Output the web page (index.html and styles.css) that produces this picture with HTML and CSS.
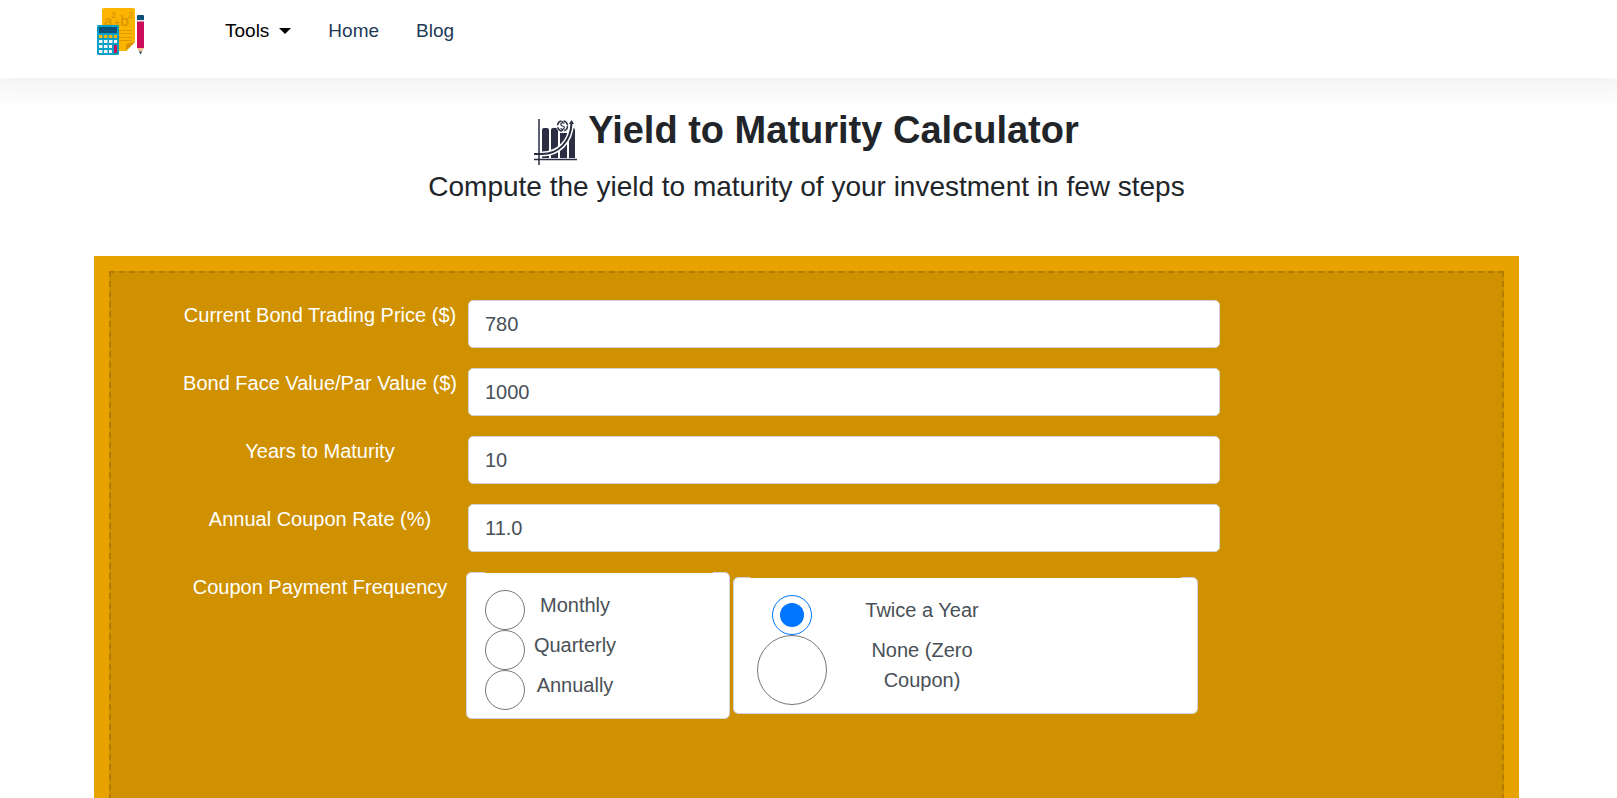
FILE: index.html
```html
<!DOCTYPE html>
<html lang="en">
<head>
    <meta charset="UTF-8">
    <meta name="viewport" content="width=device-width, initial-scale=1.0">
    <title>Yield to Maturity Calculator</title>
    <link rel="stylesheet" href="styles.css">
</head>
<body>

    <header class="site-header">
        <nav class="navbar">
            <a class="brand" href="#" aria-label="Calculators">
                <svg class="logo" viewBox="0 0 48 48" aria-hidden="true">
                    <path d="M7 0H36Q38 0 38 2V34L29 43H5V2Q5 0 7 0Z" fill="#fbb500"/>
                    <path d="M38 34L29 43V37Q30 35 32 35Z" fill="#d99500"/>
                    <text class="logo-text" x="7" y="18" font-size="15">a</text>
                    <text class="logo-text" x="14" y="10" font-size="9">2</text>
                    <text class="logo-text" x="17" y="18" font-size="10">+</text>
                    <text class="logo-text" x="23" y="18" font-size="15">b</text>
                    <text class="logo-text" x="31" y="10" font-size="9">2</text>
                    <path d="M22 22.5H35M22 25.5H35M22 29.5H35M22 32.5H35" stroke="#dd9a00" stroke-width="1"/>
                    <rect x="0" y="17" width="22" height="30" rx="1.500" fill="#08a0c4"/>
                    <rect x="2" y="19" width="18" height="6" fill="#0b5078"/>
                    <path d="M2 28.500H20" stroke="#fbb500" stroke-width="3" stroke-dasharray="3.500 1.500"/>
                    <path d="M2 33.500H20M2 38.500H15M2 43.500H15" stroke="#f4f6f8" stroke-width="3" stroke-dasharray="3.500 1.500"/>
                    <rect x="17" y="37" width="3" height="8" fill="#c8105a"/>
                    <path d="M40 12V8Q40 7 41 7H46Q47 7 47 8V12Z" fill="#0b5078"/>
                    <rect x="40" y="12" width="7" height="1.500" fill="#e6e8ee"/>
                    <rect x="40" y="13.500" width="7" height="26.500" fill="#cb0c58"/>
                    <path d="M40 40H47L44.500 45H42.500Z" fill="#f5c396"/>
                    <path d="M42 43.500H45L43.500 46.500Z" fill="#0b5078"/>
                </svg>
            </a>
            <ul class="nav-list">
                <li><button class="nav-item dropdown" type="button">Tools</button></li>
                <li><a class="nav-item" href="#">Home</a></li>
                <li><a class="nav-item" href="#">Blog</a></li>
            </ul>
        </nav>
    </header>

    <main class="container">
        <div class="intro">
            <h1>
                <svg class="chart-icon" viewBox="0 0 44 48" aria-hidden="true">
                    <g fill="#2b2e43">
                        <path d="M8 40V12Q8 10 10 10H13Q15 10 15 12V40Z"/>
                        <path d="M17 40V12Q17 10 19 10H22Q24 10 24 12V40Z"/>
                        <path d="M26 40V15H33V40Z"/>
                        <path d="M35 40V12Q35 10 37 10H39Q41 10 41 12V40Z"/>
                    </g>
                    <path d="M0 36H8C24 36 37 24 37.500 5" fill="none" stroke="#fff" stroke-width="5"/>
                    <path d="M0 36H8C24 36 37 24 37.500 5" fill="none" stroke="#2b2e43" stroke-width="2"/>
                    <path d="M35 6L37.500 2L40 6Z" fill="#2b2e43"/>
                    <path d="M5 1V47M0 41.500H43" fill="none" stroke="#2b2e43" stroke-width="1.500"/>
                    <circle cx="28.500" cy="8" r="6.500" fill="#fff"/>
                    <circle cx="28.500" cy="8" r="5" fill="none" stroke="#2b2e43" stroke-width="1.500" stroke-dasharray="6 2"/>
                    <path d="M30.500 5.500Q28.500 4 27 5.500Q26.500 7.500 28.500 8Q31 8.500 30 10.500Q28.500 12 26.500 10.500M28.500 3V5M28.500 11V13" fill="none" stroke="#2b2e43" stroke-width="1.200"/>
                </svg>
                Yield to Maturity Calculator
            </h1>
            <p>Compute the yield to maturity of your investment in few steps</p>
        </div>

        <div class="calculator">
            <form class="calc-form">
                <label for="price">Current Bond Trading Price ($)</label>
                <input class="form-control" type="text" id="price" value="780">

                <label for="face-value">Bond Face Value/Par Value ($)</label>
                <input class="form-control" type="text" id="face-value" value="1000">

                <label for="years">Years to Maturity</label>
                <input class="form-control" type="text" id="years" value="10">

                <label for="coupon-rate">Annual Coupon Rate (%)</label>
                <input class="form-control" type="text" id="coupon-rate" value="11.0">

                <span class="group-label" id="frequency">Coupon Payment Frequency</span>
                <div class="frequency" role="radiogroup" aria-labelledby="frequency">
                    <fieldset class="options">
                        <legend></legend>
                        <input type="radio" name="frequency" id="monthly">
                        <label for="monthly">Monthly</label>
                        <input type="radio" name="frequency" id="quarterly">
                        <label for="quarterly">Quarterly</label>
                        <input type="radio" name="frequency" id="annually">
                        <label for="annually">Annually</label>
                    </fieldset>
                    <fieldset class="options options-wide">
                        <legend></legend>
                        <input type="radio" name="frequency" id="twice" checked>
                        <label for="twice">Twice a Year</label>
                        <input class="large" type="radio" name="frequency" id="none">
                        <label for="none">None (Zero Coupon)</label>
                    </fieldset>
                </div>
            </form>
        </div>
    </main>

</body>
</html>
```

FILE: styles.css
```css
* {
    box-sizing: border-box;
}
body {
    font-family: "Liberation Sans", Arial, sans-serif;
    font-size: 20px;
    line-height: 30px;
    margin: 0;
    color: #212529;
    background-color: #ffffff;
}

/* Header */
.site-header {
    height: 78px;
    padding: 0 94px;
    background-color: #ffffff;
    box-shadow: 0 2px 24px 12px rgba(0,0,0,0.05);
}
.navbar {
    display: flex;
    align-items: flex-start;
    padding-top: 8px;
}
.brand {
    margin-left: 3px;
    margin-right: 80px;
}
.logo {
    display: block;
    width: 48px;
    height: 48px;
}
.logo-text {
    fill: #dd9a00;
    font-weight: bold;
}
.nav-list {
    display: flex;
    gap: 37px;
    margin: 0;
    padding: 8px 0 0;
    list-style: none;
}
.nav-item {
    display: block;
    padding: 0;
    border: none;
    background: none;
    font-family: inherit;
    font-size: 19px;
    line-height: 30px;
    color: #1d3a57;
    text-decoration: none;
    cursor: pointer;
}
.dropdown {
    display: flex;
    align-items: center;
    gap: 10px;
    color: #000000;
}
.dropdown::after {
    content: "";
    border-top: 6px solid #000000;
    border-left: 6px solid transparent;
    border-right: 6px solid transparent;
}

/* Page */
.container {
    padding: 0 98px 0 94px;
}
.intro {
    padding: 29px 0 48px;
    text-align: center;
}
h1 {
    display: flex;
    justify-content: center;
    gap: 10px;
    margin: 0;
    font-size: 38px;
    line-height: 46px;
}
.chart-icon {
    width: 44px;
    height: 48px;
    margin-top: 11px;
}
.intro p {
    margin: 0;
    font-size: 28px;
    line-height: 42px;
}

/* Calculator */
.calculator {
    padding: 15px;
    background-color: #e8a200;
}
.calc-form {
    display: grid;
    grid-template-columns: 292px 756px;
    row-gap: 20px;
    min-height: 600px;
    align-content: start;
    padding: 27px 0 0 63px;
    border: 2px dashed #b17c00;
    background-color: #cf9100;
    color: #ffffff;
    text-align: center;
}
.form-control {
    height: 48px;
    margin: 0 2px;
    padding: 0 16px;
    border: 1px solid #ced4da;
    border-radius: 5px;
    background-color: #ffffff;
    font-family: inherit;
    font-size: 20px;
    color: #495057;
}

/* Payment frequency */
.frequency {
    display: flex;
    align-items: center;
    gap: 3px;
}
.options {
    display: grid;
    grid-template-columns: 40px 100px;
    align-content: start;
    width: 264px;
    margin: 0;
    padding: 17px 16px 8px 18px;
    border: 1px solid #ced4da;
    border-radius: 5px;
    background-color: #ffffff;
    background-clip: padding-box;
    color: #495057;
}
.options-wide {
    grid-template-columns: 84px 176px;
    width: 465px;
    padding-left: 16px;
}
.options-wide label {
    padding: 0 20px;
}
.options legend {
    width: 100%;
    padding: 0;
}
.options input {
    justify-self: center;
    width: 40px;
    height: 40px;
    margin: 0;
}
.options input.large {
    width: 70px;
    height: 70px;
}
```
